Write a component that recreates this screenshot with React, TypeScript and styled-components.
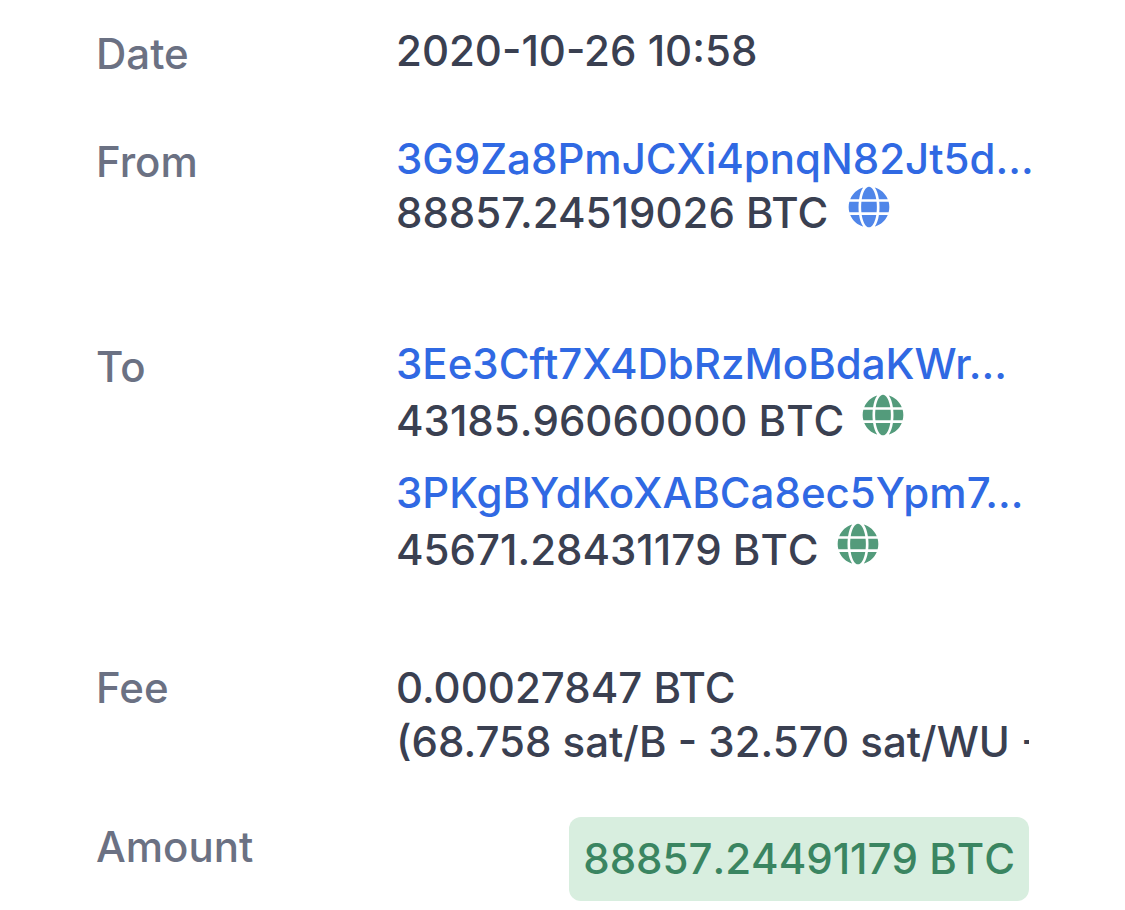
import React from "react";
import styled, { createGlobalStyle } from "styled-components";

const GlobalStyle = createGlobalStyle`
  body {
    margin: 0;
    background: #ffffff;
    color: #3a4051;
    font-family: Inter, "Liberation Sans", sans-serif;
    font-size: 42px;
    font-weight: 500;
    line-height: 54px;
  }
`;

const Details = styled.dl`
  display: flex;
  flex-direction: column;
  box-sizing: border-box;
  margin: 0;
  padding: 24px 96px 9px;
`;

const Row = styled.div<{ $after?: number }>`
  display: grid;
  grid-template-columns: 300px minmax(0, 1fr);
  margin-bottom: ${(p) => p.$after ?? 0}px;
`;

const Label = styled.dt<{ $level?: boolean }>`
  padding-top: ${(p) => (p.$level ? 0 : 3)}px;
  color: #6b7183;
`;

const Value = styled.dd`
  margin: 0;
  white-space: nowrap;
`;

const Transfer = styled.div`
  & + & {
    margin-top: 18px;
  }
`;

const Address = styled.a`
  display: block;
  color: #3069e3;
  text-decoration: none;
`;

const Sum = styled.div<{ $output?: boolean }>`
  display: flex;
  align-items: flex-start;
  gap: ${(p) => (p.$output ? 18 : 20)}px;
  padding-top: ${(p) => (p.$output ? 3 : 0)}px;
  font-kerning: ${(p) => (p.$output ? "none" : "normal")};
`;

const Globe = styled.svg<{ $color: string }>`
  width: 42px;
  height: 42px;
  fill: ${(p) => p.$color};
`;

const Rate = styled.div`
  overflow: hidden;
`;

const Badge = styled.span`
  display: block;
  width: fit-content;
  margin-left: auto;
  padding: 15px 14px;
  border-radius: 12px;
  background: #d8eedf;
  color: #3a8561;
  font-kerning: none;
`;

function GlobeIcon({ color }: { color: string }) {
  return (
    <Globe $color={color} viewBox="0 0 496 512" aria-hidden="true">
      <path d="M336.5 160C322 70.700 287.800 8 248 8s-74 62.700-88.500 152h177zM152 256c0 22.200 1.200 43.500 3.300 64h185.300c2.100-20.500 3.300-41.800 3.300-64s-1.200-43.500-3.300-64H155.300c-2.100 20.500-3.300 41.800-3.300 64zm324.700-96c-28.600-67.900-86.500-120.400-158-141.600 24.400 33.800 41.200 84.700 50 141.600h108zM177.200 18.400C105.800 39.600 47.800 92.100 19.300 160h108c8.700-56.900 25.500-107.800 49.900-141.600zM487.400 192H372.700c2.100 21 3.300 42.500 3.300 64s-1.200 43-3.300 64h114.600c5.500-20.500 8.600-41.800 8.600-64s-3.100-43.500-8.500-64zM120 256c0-21.500 1.200-43 3.300-64H8.600C3.200 212.500 0 233.800 0 256s3.200 43.500 8.600 64h114.600c-2-21-3.200-42.500-3.200-64zm39.500 96c14.500 89.300 48.700 152 88.500 152s74-62.700 88.500-152h-177zm159.300 141.600c71.400-21.200 129.400-73.700 158-141.600h-108c-8.800 56.900-25.600 107.800-50 141.600zM19.300 352c28.600 67.900 86.500 120.400 158 141.600-24.400-33.800-41.200-84.700-50-141.600h-108z" />
    </Globe>
  );
}

export default function App() {
  return (
    <>
      <GlobalStyle />
      <Details>
        <Row $after={51}>
          <Label>Date</Label>
          <Value>2020-10-26 10:58</Value>
        </Row>
        <Row $after={97}>
          <Label>From</Label>
          <Value>
            <Address href="#from">3G9Za8PmJCXi4pnqN82Jt5d...</Address>
            <Sum>
              88857.24519026 BTC
              <GlobeIcon color="#5086e9" />
            </Sum>
          </Value>
        </Row>
        <Row $after={84}>
          <Label>To</Label>
          <Value>
            <Transfer>
              <Address href="#to-1">3Ee3Cft7X4DbRzMoBdaKWr...</Address>
              <Sum $output>
                43185.96060000 BTC
                <GlobeIcon color="#539b7b" />
              </Sum>
            </Transfer>
            <Transfer>
              <Address href="#to-2">3PKgBYdKoXABCa8ec5Ypm7...</Address>
              <Sum $output>
                45671.28431179 BTC
                <GlobeIcon color="#539b7b" />
              </Sum>
            </Transfer>
          </Value>
        </Row>
        <Row $after={48}>
          <Label $level>Fee</Label>
          <Value>
            0.00027847 BTC
            <Rate>(68.758 sat/B - 32.570 sat/WU - 273 bytes)</Rate>
          </Value>
        </Row>
        <Row>
          <Label>Amount</Label>
          <Value>
            <Badge>88857.24491179 BTC</Badge>
          </Value>
        </Row>
      </Details>
    </>
  );
}
